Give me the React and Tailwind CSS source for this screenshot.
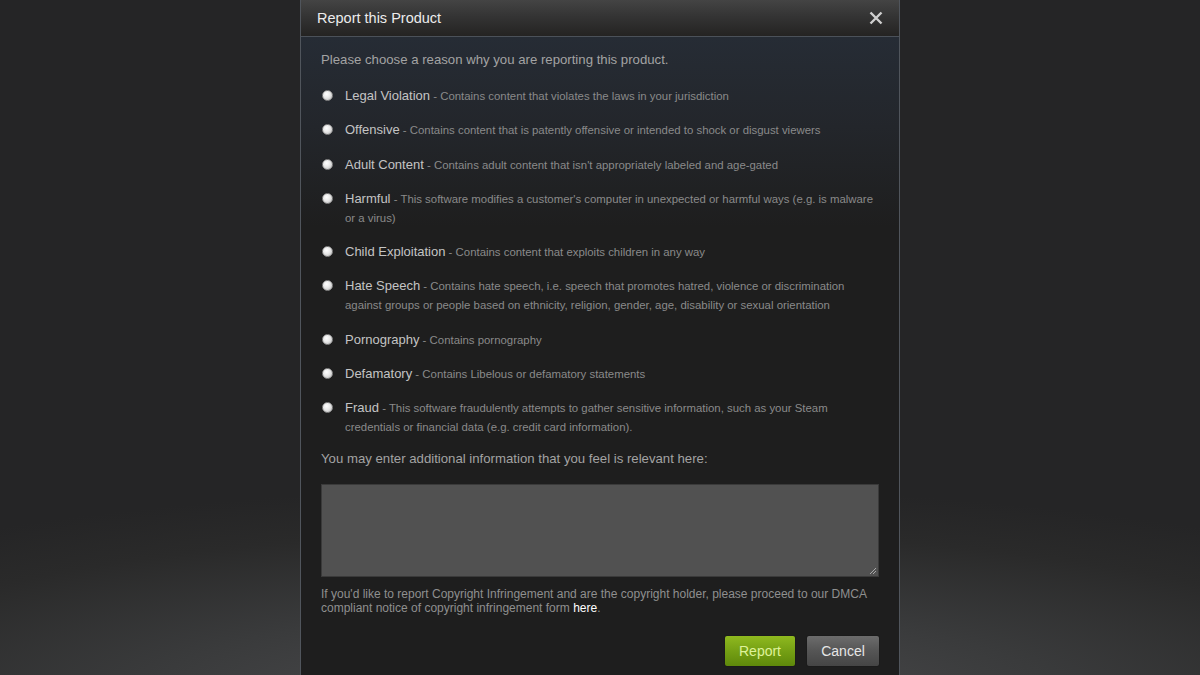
import React from "react";

const reasons = [
  ["Legal Violation", "Contains content that violates the laws in your jurisdiction"],
  ["Offensive", "Contains content that is patently offensive or intended to shock or disgust viewers"],
  ["Adult Content", "Contains adult content that isn't appropriately labeled and age-gated"],
  ["Harmful", "This software modifies a customer's computer in unexpected or harmful ways (e.g. is malware or a virus)"],
  ["Child Exploitation", "Contains content that exploits children in any way"],
  ["Hate Speech", "Contains hate speech, i.e. speech that promotes hatred, violence or discrimination against groups or people based on ethnicity, religion, gender, age, disability or sexual orientation"],
  ["Pornography", "Contains pornography"],
  ["Defamatory", "Contains Libelous or defamatory statements"],
  ["Fraud", "This software fraudulently attempts to gather sensitive information, such as your Steam credentials or financial data (e.g. credit card information)."],
];

function Radio() {
  return (
    <div className="mt-[4px] h-[11px] w-[11px] shrink-0 rounded-full border border-[#8a8a8a] bg-[radial-gradient(circle_at_40%_35%,#ffffff_0%,#e8e8e8_45%,#b5b5b5_100%)]" />
  );
}

export default function App() {
  return (
    <div
      className="relative flex h-[675px] w-[1200px] justify-center overflow-hidden bg-[radial-gradient(ellipse_85%_32%_at_50%_104%,#4e4e50_0%,#3a3b3c_45%,#2a2a2a_80%,#252526_100%)]"
      style={{ fontFamily: '"Liberation Sans", Arial, sans-serif' }}
    >
      <div className="flex h-[700px] w-[600px] shrink-0 flex-col border-x border-x-[#50555c] bg-[#1e1e1e]">
        <div className="flex h-[37px] shrink-0 items-center justify-between border-b border-b-[#4b5159] bg-[linear-gradient(to_bottom,#444444_0%,#343434_45%,#242322_100%)] pl-[16px] pr-[16px]">
          <span className="text-[14.5px] leading-[18px] text-[#ececec]">Report this Product</span>
          <svg width="14" height="14" viewBox="0 0 14 14" className="mt-[-1px]">
            <path d="M1.5 1.5 L12.5 12.5 M12.5 1.5 L1.5 12.5" stroke="#cfcfcf" strokeWidth="2.4" strokeLinecap="butt" />
          </svg>
        </div>
        <div className="flex flex-1 flex-col bg-[linear-gradient(to_bottom,#262c35_0px,#23262b_90px,#1e1e1e_190px)] px-[20px] pt-[13px]">
          <p className="text-[13.2px] leading-[19px] text-[#a3a3a3]">
            Please choose a reason why you are reporting this product.
          </p>
          <div className="mt-[17px] flex flex-col gap-[15.25px]">
            {reasons.map(([label, desc]) => (
              <div key={label} className="flex items-start">
                <div className="w-[24px] pl-[1px]">
                  <Radio />
                </div>
                <div className="flex-1 text-[13px] leading-[19px]">
                  <span className="leading-[0] text-[#c4c4c4]">{label}</span>
                  <span className="text-[11.4px] leading-[0] text-[#8a8a8a]">
                    {" - "}
                    {desc}
                  </span>
                </div>
              </div>
            ))}
          </div>
          <p className="mt-[13px] text-[13.2px] leading-[19px] text-[#a3a3a3]">
            You may enter additional information that you feel is relevant here:
          </p>
          <div className="relative mt-[16px] h-[93px] w-[558px] border border-[#3a3a3a] bg-[#515151]">
            <svg width="8" height="8" viewBox="0 0 8 8" className="absolute bottom-[1px] right-[1px]">
              <path d="M7 1 L1 7 M7 4 L4 7" stroke="#a8a8a8" strokeWidth="1" />
            </svg>
          </div>
          <p className="mt-[10px] text-[12px] leading-[14px] text-[#8f8f8f]">
            If you'd like to report Copyright Infringement and are the copyright holder, please proceed to our DMCA compliant notice of copyright infringement form{" "}
            <span className="text-white">here</span>.
          </p>
          <div className="mt-[21px] flex justify-end gap-[12px]">
            <button className="h-[30px] w-[70px] rounded-[2px] bg-[linear-gradient(to_bottom,#8fb91f_0%,#75a014_50%,#5e880b_100%)] text-[14px] text-[#dff29a] shadow-[0_0_1px_#000]">
              Report
            </button>
            <button className="h-[30px] w-[72px] rounded-[2px] bg-[linear-gradient(to_bottom,#6c6c6c_0%,#555555_50%,#454545_100%)] text-[14px] text-[#e6e6e6] shadow-[0_0_1px_#000]">
              Cancel
            </button>
          </div>
        </div>
      </div>
    </div>
  );
}
